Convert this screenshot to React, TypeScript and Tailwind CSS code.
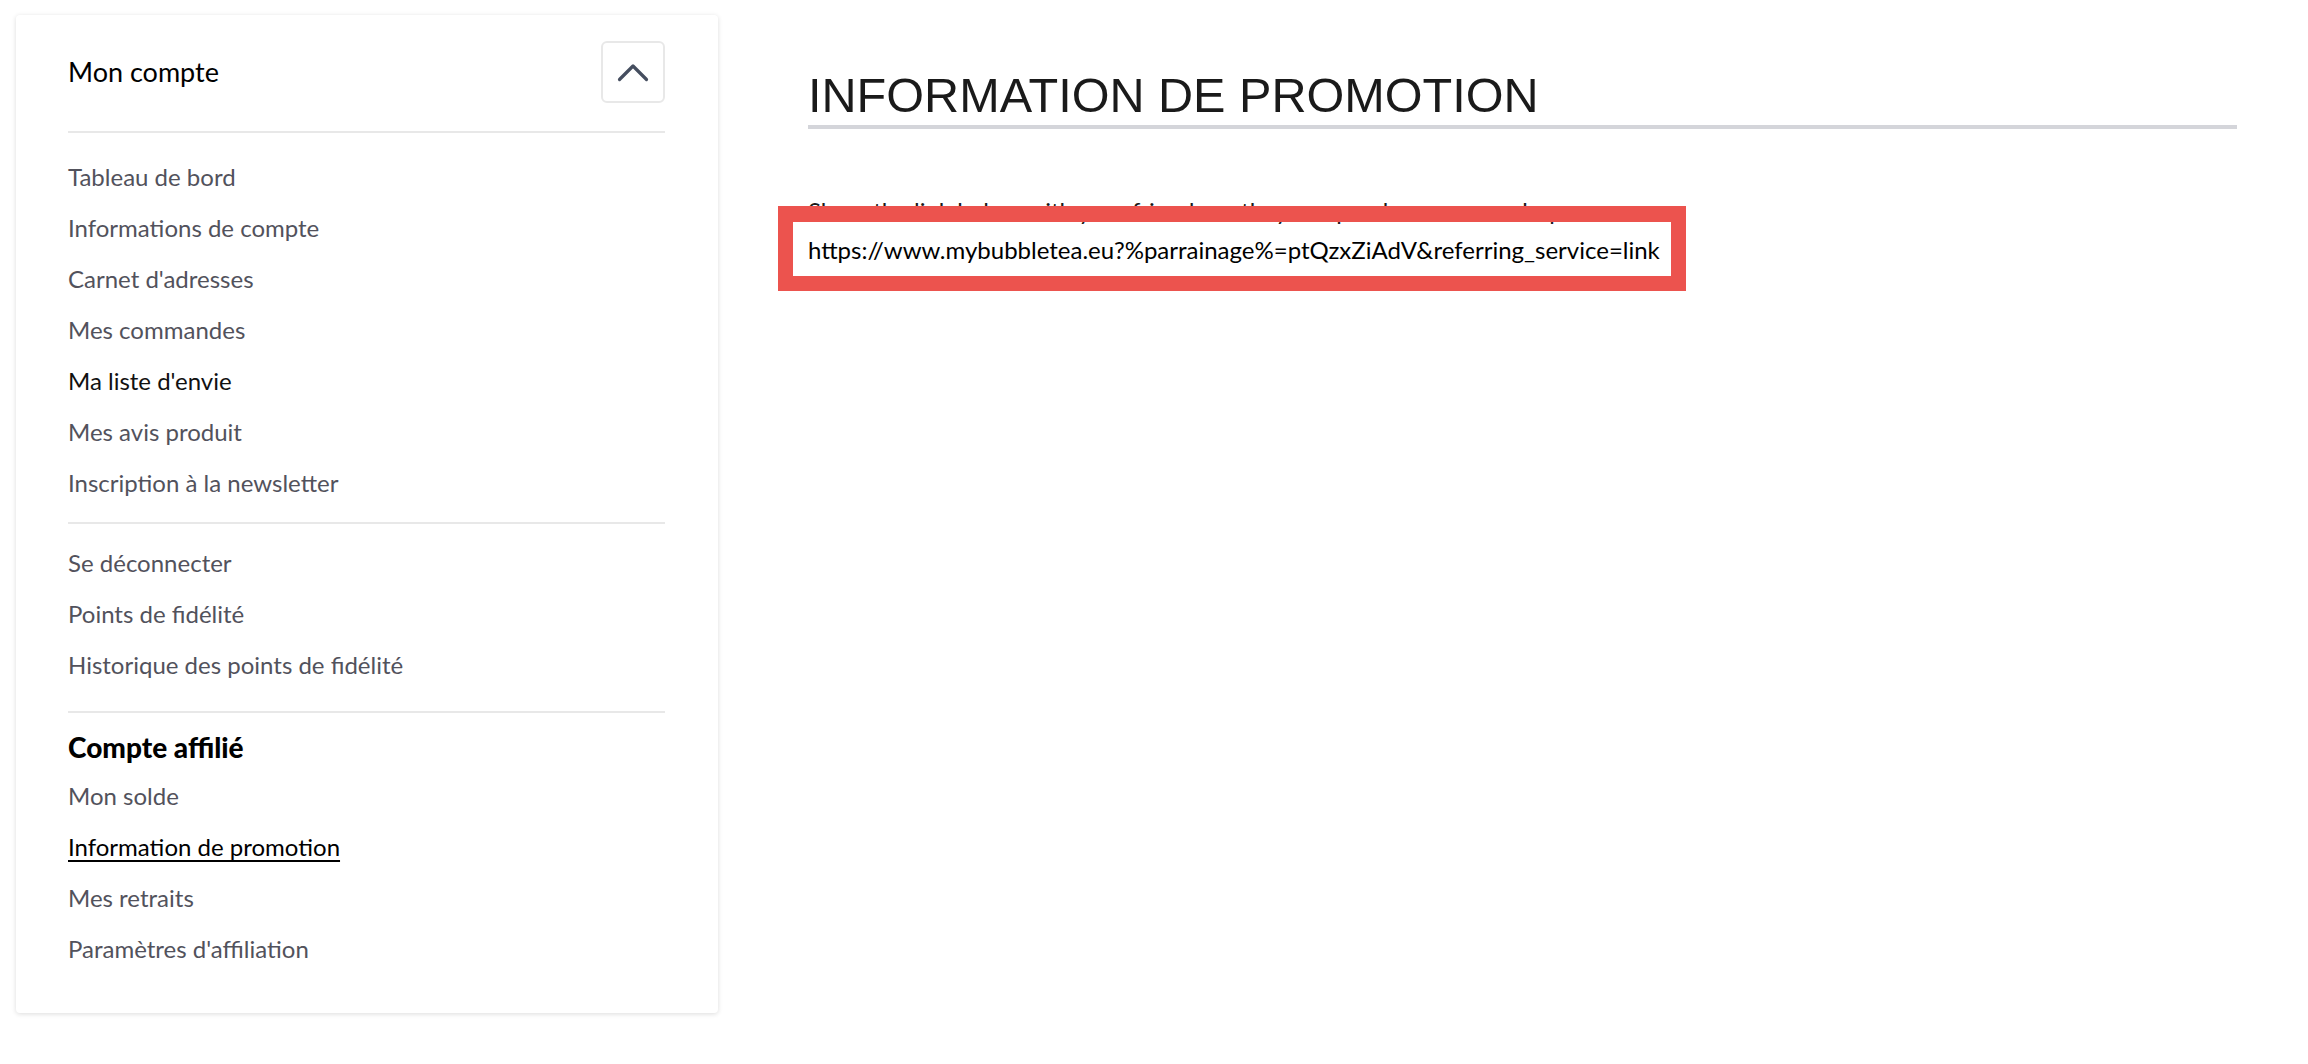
import React from 'react';

const accountLinks = [
  { label: 'Tableau de bord' },
  { label: 'Informations de compte' },
  { label: "Carnet d'adresses" },
  { label: 'Mes commandes' },
  { label: "Ma liste d'envie", dark: true },
  { label: 'Mes avis produit' },
  { label: 'Inscription à la newsletter' },
];

const sessionLinks = ['Se déconnecter', 'Points de fidélité', 'Historique des points de fidélité'];

const affiliateLinks = [
  { label: 'Mon solde' },
  { label: 'Information de promotion', active: true },
  { label: 'Mes retraits' },
  { label: "Paramètres d'affiliation" },
];

const body = "font-['Lato','Open_Sans',sans-serif]";

function NavItem({ label, dark, active }: { label: string; dark?: boolean; active?: boolean }) {
  return (
    <a
      href="#"
      className={`block h-[51px] leading-[51px] text-[24px] ${
        active
          ? 'text-black underline underline-offset-[4px] decoration-[2px]'
          : dark
          ? 'text-[#111111]'
          : 'text-[#52525c]'
      }`}
    >
      {label}
    </a>
  );
}

export default function App() {
  return (
    <div className={`min-h-screen bg-white flex gap-[90px] pl-[16px] pr-[71px] pt-[15px] ${body}`}>
      {/* Sidebar */}
      <aside className="w-[702px] shrink-0 self-start bg-white rounded-[4px] shadow-[0_1px_5px_rgba(0,0,0,0.14)] pl-[52px] pr-[53px] pt-[26px] pb-[39px]">
        <div className="flex items-center justify-between">
          <h2 className="text-[27px] text-black">Mon compte</h2>
          <button
            className="w-[64px] h-[62px] flex items-center justify-center border-2 border-[#e8e8e8] rounded-[6px]"
            aria-label="Réduire"
          >
            <svg width="32" height="19" viewBox="0 0 32 19" fill="none">
              <path
                d="M2.5 16.5 L16 3 L29.5 16.5"
                stroke="#454e5f"
                strokeWidth="3.2"
                strokeLinecap="round"
                strokeLinejoin="round"
              />
            </svg>
          </button>
        </div>

        <div className="mt-[28px] h-[2px] bg-[#e8e8e8]" />

        <nav className="pt-[18px]">
          {accountLinks.map((l) => (
            <NavItem key={l.label} label={l.label} dark={l.dark} />
          ))}
        </nav>

        <div className="mt-[14px] h-[2px] bg-[#e8e8e8]" />

        <nav className="mt-[13px]">
          {sessionLinks.map((l) => (
            <NavItem key={l} label={l} />
          ))}
        </nav>

        <div className="mt-[21px] h-[2px] bg-[#e8e8e8]" />

        <div className="mt-[11px] h-[46px] leading-[46px] text-[28px] font-black text-black">Compte affilié</div>
        <nav>
          {affiliateLinks.map((l) => (
            <NavItem key={l.label} label={l.label} active={l.active} />
          ))}
        </nav>
      </aside>

      {/* Content */}
      <main className="flex-1">
        <h1 className="mt-[56px] pb-[5px] border-b-4 border-[#d4d5da] font-['Liberation_Sans','Arial',sans-serif] text-[48.6px] leading-none text-[#1a1a1a]">
          INFORMATION DE PROMOTION
        </h1>

        <p className="mt-[67px] text-[24px] leading-[30px] text-[#1a1a1a]">
          Share the link below with your friends so they can purchase on our shop
        </p>

        <div className="mt-[9px]">
          <span className="relative inline-block text-[24px] leading-[30px] text-black">
            https://www.mybubbletea.eu?%parrainage%=ptQzxZiAdV&amp;referring_service=link
            {/* highlight frame drawn over the content */}
            <span className="pointer-events-none absolute -left-[30px] -right-[26px] -top-[29px] -bottom-[26px] border-[15px] border-t-[16px] border-[#ec534e]" />
          </span>
        </div>
      </main>
    </div>
  );
}
